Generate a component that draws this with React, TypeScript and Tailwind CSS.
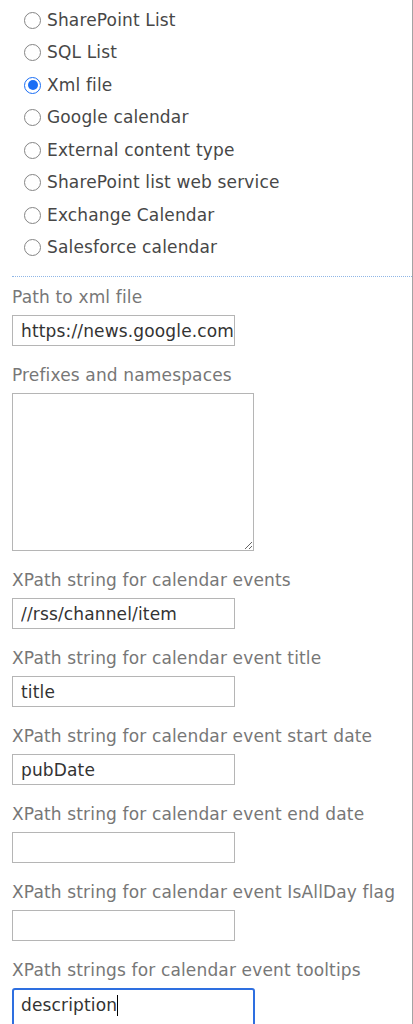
import React from "react";

const options = [
  "SharePoint List",
  "SQL List",
  "Xml file",
  "Google calendar",
  "External content type",
  "SharePoint list web service",
  "Exchange Calendar",
  "Salesforce calendar",
];

function Radio({ checked }: { checked: boolean }) {
  if (checked) {
    return (
      <span className="flex h-[17px] w-[17px] shrink-0 items-center justify-center rounded-full border-[1.5px] border-[#1a6ef5] bg-white">
        <span className="h-[10px] w-[10px] rounded-full bg-[#1a6ef5]" />
      </span>
    );
  }
  return <span className="h-[17px] w-[17px] shrink-0 rounded-full border border-[#858585] bg-white" />;
}

function Field({ label, value, focused }: { label: string; value?: string; focused?: boolean }) {
  return (
    <div className="flex flex-col">
      <div className="h-[20px] whitespace-nowrap leading-[20px] text-[#777777]">{label}</div>
      {focused ? (
        <div className="mt-[8px] flex h-[40px] w-[243px] items-start rounded-[3px] border-2 border-[#2e6fe0] pl-[7px] pt-[3px] text-[#333333]">
          <span>{value}</span>
          <span className="mt-[2px] h-[21px] w-px bg-black" />
        </div>
      ) : (
        <input
          readOnly
          value={value}
          className="mt-[8px] h-[31px] w-[223px] border border-[#b5b5b5] bg-white pl-[8px] text-[#333333] outline-none"
        />
      )}
      <div className="h-[19px]" />
    </div>
  );
}

export default function App() {
  return (
    <div className="min-h-[1024px] w-[413px] overflow-hidden border-r border-[#a3a3a3] bg-white font-['DejaVu_Sans',sans-serif] text-[17px] tracking-[0.15px]">
      <div className="flex flex-col pl-[24px] pt-[4px]">
        {options.map((o, i) => (
          <div key={o} className="flex h-[32.5px] items-center gap-[6px]">
            <Radio checked={i === 2} />
            <span className="whitespace-nowrap text-[#474747]">{o}</span>
          </div>
        ))}
      </div>
      <div className="ml-[12px] mt-[12px] border-t border-dotted border-[#8fb6e6]" />
      <div className="flex flex-col pl-[12px] pt-[10px]">
        <Field label="Path to xml file" value="https://news.google.com/rss" />
        <div className="flex flex-col">
          <div className="h-[20px] leading-[20px] text-[#777777]">Prefixes and namespaces</div>
          <textarea
            readOnly
            className="mt-[8px] h-[158px] w-[242px] resize border border-[#b5b5b5] bg-white outline-none"
            defaultValue=""
          />
          <div className="h-[19px]" />
        </div>
        <Field label="XPath string for calendar events" value="//rss/channel/item" />
        <Field label="XPath string for calendar event title" value="title" />
        <Field label="XPath string for calendar event start date" value="pubDate" />
        <Field label="XPath string for calendar event end date" value="" />
        <Field label="XPath string for calendar event IsAllDay flag" value="" />
        <Field label="XPath strings for calendar event tooltips" value="description" focused />
      </div>
    </div>
  );
}
